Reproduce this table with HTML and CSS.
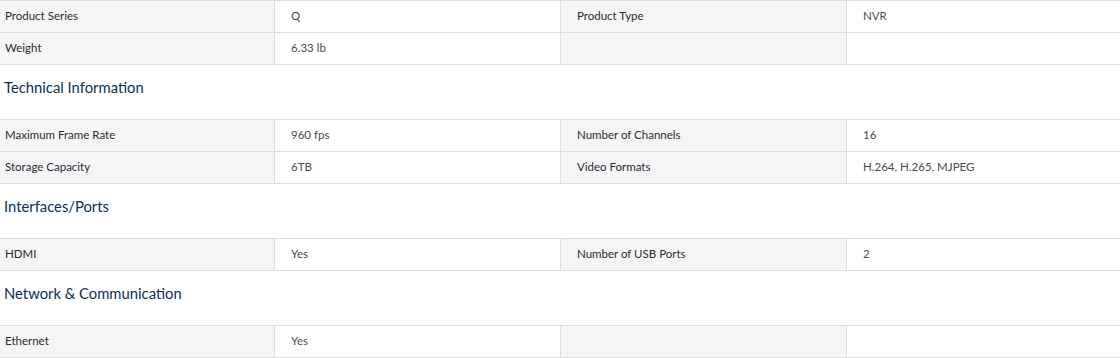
FILE: index.html
```html
<!DOCTYPE html>
<html lang="en">
<head>
<meta charset="utf-8">
<title>Specifications</title>
<link rel="stylesheet" href="styles.css">
</head>
<body>
<div class="specs">
  <div class="spec-table">
    <div class="row"><div class="cell label">Product Series</div><div class="cell value">Q</div><div class="cell label">Product Type</div><div class="cell value">NVR</div></div>
    <div class="row"><div class="cell label">Weight</div><div class="cell value">6.33 lb</div><div class="cell label"></div><div class="cell value"></div></div>
  </div>
  <h3 class="section-title">Technical Information</h3>
  <div class="spec-table">
    <div class="row"><div class="cell label">Maximum Frame Rate</div><div class="cell value">960 fps</div><div class="cell label">Number of Channels</div><div class="cell value">16</div></div>
    <div class="row"><div class="cell label">Storage Capacity</div><div class="cell value">6TB</div><div class="cell label">Video Formats</div><div class="cell value">H.264, H.265, MJPEG</div></div>
  </div>
  <h3 class="section-title">Interfaces/Ports</h3>
  <div class="spec-table">
    <div class="row"><div class="cell label">HDMI</div><div class="cell value">Yes</div><div class="cell label">Number of USB Ports</div><div class="cell value">2</div></div>
  </div>
  <h3 class="section-title">Network &amp; Communication</h3>
  <div class="spec-table">
    <div class="row"><div class="cell label">Ethernet</div><div class="cell value">Yes</div><div class="cell label"></div><div class="cell value"></div></div>
  </div>
</div>
</body>
</html>
```

FILE: styles.css
```css
html, body {
  margin: 0;
  padding: 0;
  background: #ffffff;
}
body {
  font-family: Lato, "Noto Sans", "Liberation Sans", sans-serif;
  color: #333;
}
.specs {
  width: 1120px;
  overflow: hidden;
}
.spec-table {
  border-top: 1px solid #dddddd;
}
.row {
  display: grid;
  grid-template-columns: 274px 286px 286px 1fr;
  height: 32px;
  box-sizing: border-box;
  border-bottom: 1px solid #dddddd;
}
.cell {
  display: flex;
  align-items: center;
  font-size: 11.5px;
  padding-left: 16px;
  padding-bottom: 2px;
  border-left: 1px solid #dddddd;
}
.cell:first-child {
  border-left: none;
  padding-left: 5px;
}
.label {
  background: #f5f5f5;
  color: #2a2a38;
}
.value {
  background: #ffffff;
  color: #4a4a58;
}
.section-title {
  margin: 0;
  height: 54px;
  box-sizing: border-box;
  padding: 12px 0 0 4px;
  font-size: 14.8px;
  font-weight: 400;
  line-height: 20px;
  color: #0c2f55;
}
```
